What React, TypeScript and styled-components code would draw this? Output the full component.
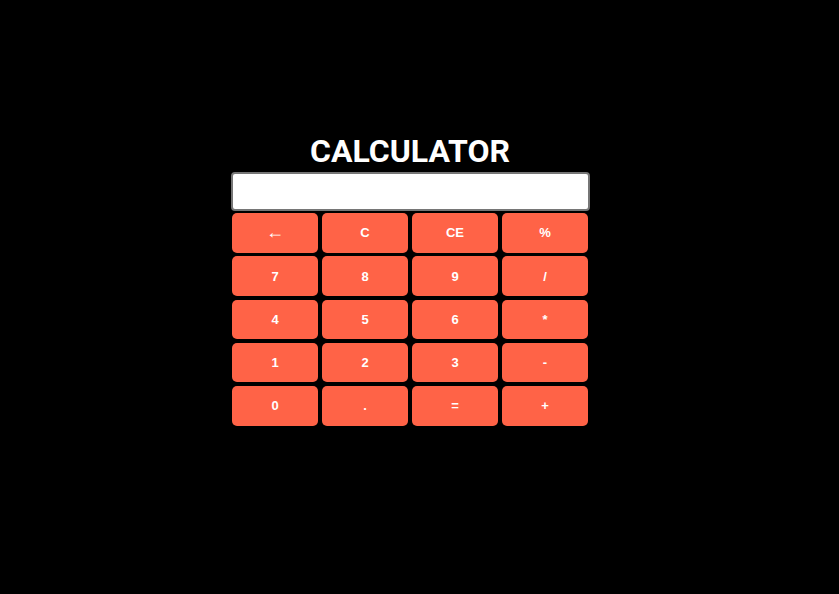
import styled, { createGlobalStyle } from 'styled-components'

const GlobalStyle = createGlobalStyle`
    html, body {
        margin: 0;
        padding: 0;
        background: #000;
    }
    body {
        font-family: "Liberation Sans", Arial, sans-serif;
    }
`

const Page = styled.div`
    min-height: 594px;
    display: flex;
    justify-content: center;
    align-items: flex-start;
    padding: 133px 19px 0 0;
    box-sizing: border-box;
`

const Calculator = styled.div`
    width: 359px;
    display: flex;
    flex-direction: column;
    align-items: center;
`

const Title = styled.h1`
    margin: 0 0 2px;
    font-family: Roboto, "Liberation Sans", sans-serif;
    font-weight: 700;
    font-size: 32px;
    line-height: 37px;
    color: #fff;
`

const Display = styled.input`
    width: 359px;
    height: 39px;
    box-sizing: border-box;
    border: 2px solid #767676;
    border-radius: 4px;
    background: #fff;
    outline: none;
    font-size: 20px;
    padding: 0 8px;
`

const Keys = styled.div`
    width: 356px;
    margin-top: 2px;
    display: grid;
    grid-template-columns: repeat(4, 86px);
    grid-auto-rows: 39.5px;
    column-gap: 4px;
    row-gap: 3.75px;
`

const Key = styled.button<{ $big?: boolean }>`
    border: none;
    border-radius: 5px;
    background: #ff6347;
    color: #fff;
    font-family: "Liberation Sans", Arial, sans-serif;
    font-weight: 700;
    font-size: ${p => (p.$big ? '18px' : '13px')};
    padding: 0;
    cursor: pointer;
`

const keys = ['←', 'C', 'CE', '%', '7', '8', '9', '/', '4', '5', '6', '*', '1', '2', '3', '-', '0', '.', '=', '+']

export default function App() {
    return <>
        <GlobalStyle />
        <Page>
            <Calculator>
                <Title>CALCULATOR</Title>
                <Display type="text" readOnly />
                <Keys>
                    {keys.map(k => <Key key={k} $big={k === '←'}>{k}</Key>)}
                </Keys>
            </Calculator>
        </Page>
    </>
}
